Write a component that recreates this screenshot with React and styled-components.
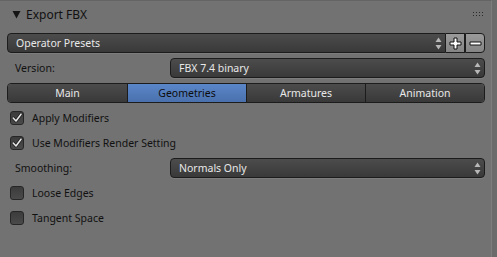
import styled, { createGlobalStyle } from "styled-components";

const Global = createGlobalStyle`
  html, body {
    margin: 0;
    padding: 0;
    background: #6b6b6b;
  }
  body {
    font-family: "Noto Sans", "Open Sans", "DejaVu Sans", sans-serif;
    font-size: 10.5px;
  }
`;

const Panel = styled.div`
  width: 492px;
  height: 257px;
  box-sizing: border-box;
  background: #727272;
  border-top: 1px solid #646464;
  border-right: 1px solid #7d7d7d;
  padding: 0 6px 0 7px;
  display: flex;
  flex-direction: column;
`;

const Header = styled.div`
  height: 26px;
  display: flex;
  align-items: center;
  padding-left: 5px;
  gap: 5px;
  color: #111;
  font-size: 12px;
`;

const Title = styled.span`
  flex: 1;
`;

const Body = styled.div`
  display: flex;
  flex-direction: column;
  gap: 5px;
  padding-top: 6px;
`;

const Row = styled.div`
  height: 20px;
  display: flex;
  align-items: stretch;
`;

const SplitRow = styled.div`
  height: 20px;
  display: grid;
  grid-template-columns: 163px 1fr;
  align-items: center;
`;

const Label = styled.span`
  color: #111;
  padding-left: 8px;
`;

const Dropdown = styled.div`
  flex: 1;
  height: 20px;
  box-sizing: border-box;
  display: flex;
  align-items: center;
  justify-content: space-between;
  padding: 0 3px 0 8px;
  color: #e8e8e8;
  background: linear-gradient(#4c4c4c, #393939);
  border: 1px solid #1c1c1c;
  border-radius: ${(p) => p.$radius || "4px"};
  box-shadow: 0 1px 0 rgba(255, 255, 255, 0.08);
`;

const IconButton = styled.div`
  width: ${(p) => p.$w}px;
  height: 20px;
  box-sizing: border-box;
  display: flex;
  align-items: center;
  justify-content: center;
  background: linear-gradient(#9a9a9a, #858585);
  border: 1px solid #1c1c1c;
  border-left: ${(p) => (p.$first ? "none" : "1px solid #1c1c1c")};
  border-radius: ${(p) => p.$radius || "0"};
`;

const Tabs = styled.div`
  height: 20px;
  display: grid;
  grid-template-columns: repeat(4, 1fr);
  box-sizing: border-box;
  border: 1px solid #1c1c1c;
  border-radius: 4px;
  overflow: hidden;
`;

const Tab = styled.div`
  display: flex;
  align-items: center;
  justify-content: center;
  color: ${(p) => (p.$active ? "#0d0d0d" : "#e8e8e8")};
  background: ${(p) =>
    p.$active
      ? "linear-gradient(#5a86c8, #4a71ad)"
      : "linear-gradient(#4c4c4c, #393939)"};
  border-left: ${(p) => (p.$first ? "none" : "1px solid #1c1c1c")};
`;

const CheckRow = styled.div`
  height: 20px;
  display: flex;
  align-items: center;
  gap: 8px;
  padding-left: 3px;
  color: #111;
`;

const Box = styled.div`
  width: 14px;
  height: 14px;
  box-sizing: border-box;
  border: 1px solid #262626;
  border-radius: 3px;
  background: linear-gradient(#3c3c3c, #4a4a4a);
  display: flex;
  align-items: center;
  justify-content: center;
`;

const Arrows = () => (
  <svg width="7" height="13" viewBox="0 0 7 13">
    <path d="M3.5 0.5 L6.5 5 L0.5 5 Z" fill="#b8b8b8" />
    <path d="M3.5 12.5 L6.5 8 L0.5 8 Z" fill="#b8b8b8" />
  </svg>
);

const Check = () => (
  <svg width="12" height="12" viewBox="0 0 12 12">
    <path
      d="M2.2 6 L5 9 L10 2.2"
      fill="none"
      stroke="#1a1a1a"
      strokeWidth="3"
      strokeLinecap="round"
      strokeLinejoin="round"
    />
    <path
      d="M2.2 6 L5 9 L10 2.2"
      fill="none"
      stroke="#e6e6e6"
      strokeWidth="1.6"
      strokeLinecap="round"
      strokeLinejoin="round"
    />
  </svg>
);

const Plus = () => (
  <svg width="13" height="13" viewBox="0 0 13 13">
    <path d="M5 1h3v4h4v3H8v4H5V8H1V5h4z" fill="#fff" stroke="#111" strokeWidth="1" />
  </svg>
);

const Minus = () => (
  <svg width="13" height="13" viewBox="0 0 13 13">
    <path d="M1 5h11v3H1z" fill="#fff" stroke="#111" strokeWidth="1" />
  </svg>
);

const Collapse = () => (
  <svg width="9" height="9" viewBox="0 0 9 9">
    <path d="M0.5 1 L8.5 1 L4.5 8.5 Z" fill="#151515" />
  </svg>
);

const Grip = () => (
  <svg width="12" height="5" viewBox="0 0 12 5">
    {[0, 3, 6, 9].map((x) =>
      [0, 3].map((y) => (
        <rect key={`${x}-${y}`} x={x} y={y} width="1" height="1" fill="#2a2a2a" />
      ))
    )}
  </svg>
);

const tabs = ["Main", "Geometries", "Armatures", "Animation"];

const App = () => {
  return (
    <Panel>
      <Global />
      <Header>
        <Collapse />
        <Title>Export FBX</Title>
        <Grip />
      </Header>
      <Body>
        <Row>
          <Dropdown $radius="4px 0 0 4px">
            <span>Operator Presets</span>
            <Arrows />
          </Dropdown>
          <IconButton $w={19} $first>
            <Plus />
          </IconButton>
          <IconButton $w={20} $radius="0 4px 4px 0">
            <Minus />
          </IconButton>
        </Row>
        <SplitRow>
          <Label>Version:</Label>
          <Dropdown>
            <span>FBX 7.4 binary</span>
            <Arrows />
          </Dropdown>
        </SplitRow>
        <Tabs>
          {tabs.map((t, i) => (
            <Tab key={t} $first={i === 0} $active={t === "Geometries"}>
              {t}
            </Tab>
          ))}
        </Tabs>
        <CheckRow>
          <Box>
            <Check />
          </Box>
          Apply Modifiers
        </CheckRow>
        <CheckRow>
          <Box>
            <Check />
          </Box>
          Use Modifiers Render Setting
        </CheckRow>
        <SplitRow>
          <Label>Smoothing:</Label>
          <Dropdown>
            <span>Normals Only</span>
            <Arrows />
          </Dropdown>
        </SplitRow>
        <CheckRow>
          <Box />
          Loose Edges
        </CheckRow>
        <CheckRow>
          <Box />
          Tangent Space
        </CheckRow>
      </Body>
    </Panel>
  );
};

export default App;
